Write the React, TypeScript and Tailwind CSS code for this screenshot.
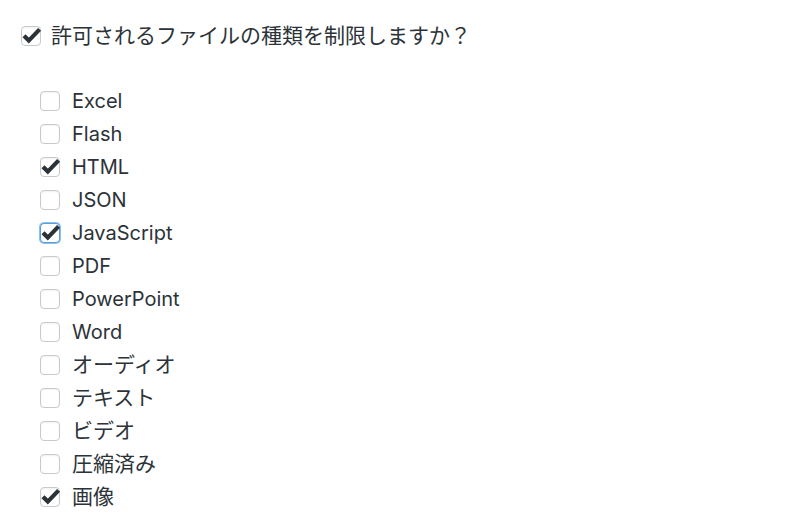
import { useState } from 'react';

const fileTypes = [
  { label: 'Excel', checked: false },
  { label: 'Flash', checked: false },
  { label: 'HTML', checked: true },
  { label: 'JSON', checked: false },
  { label: 'JavaScript', checked: true, focused: true },
  { label: 'PDF', checked: false },
  { label: 'PowerPoint', checked: false },
  { label: 'Word', checked: false },
  { label: 'オーディオ', checked: false, cjk: true },
  { label: 'テキスト', checked: false, cjk: true },
  { label: 'ビデオ', checked: false, cjk: true },
  { label: '圧縮済み', checked: false, cjk: true },
  { label: '画像', checked: true, cjk: true },
];

function Checkbox({ checked, focused, onToggle }: { checked: boolean; focused?: boolean; onToggle: () => void }) {
  return (
    <span
      onClick={onToggle}
      className={`relative inline-block h-5 w-5 shrink-0 rounded-[4px] bg-white ${
        focused
          ? 'border border-[#5b9dd9] shadow-[0_0_0_1px_#8bc0f0]'
          : 'border border-[#c9cacd] shadow-[inset_0_1px_2px_rgba(0,0,0,0.06)]'
      }`}
    >
      {checked && (
        <svg viewBox="0 0 20 20" className="absolute left-[-1px] top-[-1px] h-5 w-5 overflow-visible">
          <path
            d="M3 9.8 L7.8 14.6 L18.6 3.4"
            fill="none"
            stroke="#2c3338"
            strokeWidth="4.2"
            strokeLinejoin="miter"
            strokeLinecap="butt"
          />
        </svg>
      )}
    </span>
  );
}

export default function App() {
  const [restrict, setRestrict] = useState(true);
  const [items, setItems] = useState(fileTypes);

  const toggle = (i: number) =>
    setItems((prev) => prev.map((it, idx) => (idx === i ? { ...it, checked: !it.checked } : it)));

  return (
    <div
      className="min-h-[529px] w-[800px] bg-white text-[20px] text-[#2c3338]"
      style={{ fontFamily: 'Inter, "Noto Sans CJK JP", sans-serif' }}
    >
      {/* Restrict toggle */}
      <label className="flex items-center gap-[10px] pl-[21px] pt-[25px] leading-[21px]">
        <Checkbox checked={restrict} onToggle={() => setRestrict(!restrict)} />
        <span className="text-[21px]">許可されるファイルの種類を制限しますか？</span>
      </label>

      {/* File type list */}
      <ul className="mt-[38px] flex flex-col pl-[40px]">
        {items.map((it, i) => (
          <li key={it.label} className="flex h-[33px] items-center gap-[12px]">
            <Checkbox checked={it.checked} focused={it.focused} onToggle={() => toggle(i)} />
            <span className={it.cjk ? 'text-[21px]' : ''}>{it.label}</span>
          </li>
        ))}
      </ul>
    </div>
  );
}
